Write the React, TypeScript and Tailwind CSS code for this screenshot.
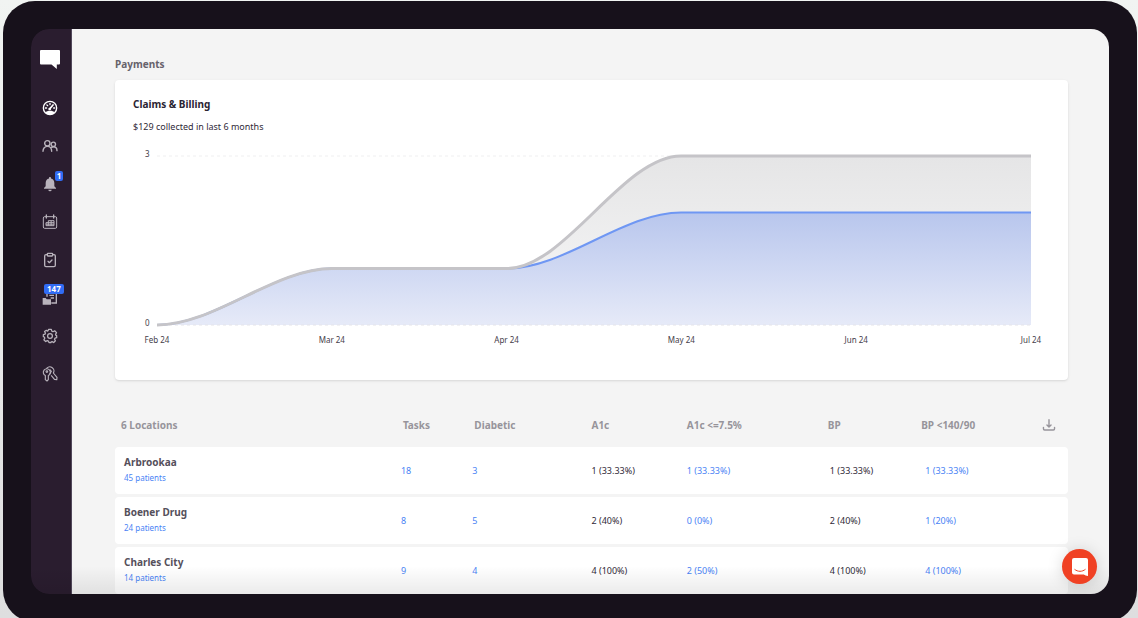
import React from 'react';
import { ClipboardCheck } from 'lucide-react';

interface NavItem {
  label: string;
  icon: React.ReactNode;
  active?: boolean;
  badge?: string;
}

interface Location {
  name: string;
  patients: number;
  tasks: string;
  diabetic: string;
  a1c: string;
  a1cGoal: string;
  bp: string;
  bpGoal: string;
}

const DashboardIcon = () => (
  <svg viewBox="0 0 24 24" className="size-4" fill="none" stroke="currentColor" strokeWidth="2">
    <circle cx="12" cy="12" r="10" />
    <path d="M4.5 18.5c2-1.6 4.6-2.5 7.5-2.5s5.5.9 7.5 2.5A10 10 0 0 1 12 22a10 10 0 0 1-7.500-3.500z" fill="currentColor" stroke="none" />
    <path d="M11.500 13.500 16.500 7.500" strokeWidth="2.600" strokeLinecap="round" />
    <circle cx="11.500" cy="13.500" r="2" fill="currentColor" stroke="none" />
    <path d="M5 12h1.800M7.300 7.300l1.200 1.200M12 5v1.800M17.500 12H19" strokeLinecap="round" />
  </svg>
);

const PeopleIcon = () => (
  <svg viewBox="0 0 24 24" className="size-4" fill="none" stroke="currentColor" strokeWidth="2.100" strokeLinecap="round">
    <circle cx="8" cy="8" r="4" />
    <path d="M1.500 20c0-4.600 2.700-7.500 6.500-7.500s6.500 2.900 6.500 7.500" />
    <circle cx="17" cy="9.500" r="3.300" />
    <path d="M14.500 14c.8-.6 1.600-.9 2.500-.9 3.200 0 5.500 2.400 5.500 5.900" />
  </svg>
);

const BellIcon = () => (
  <svg viewBox="0 0 24 24" className="size-4" fill="currentColor">
    <path d="M12 1.500c-.9 0-1.500.7-1.500 1.500v.8C7.300 4.500 5.500 7.200 5.500 10.500v5L3 18v1.200h18V18l-2.500-2.500v-5c0-3.300-1.800-6-5-6.700V3c0-.8-.6-1.500-1.500-1.500z" />
    <path d="M9.500 20.500h5a2.500 2.500 0 0 1-5 0z" />
  </svg>
);

const CalendarIcon = () => (
  <svg viewBox="0 0 24 24" className="size-4" fill="none" stroke="currentColor" strokeWidth="1.500">
    <rect x="2" y="4" width="20" height="17.500" rx="2" />
    <path d="M6.500 1.500V6M17.500 1.500V6" strokeWidth="2" strokeLinecap="round" />
    <path d="M9.500 10H18v7.500H6V13h12M9.500 10v7.500M13.700 10v7.500M6 15.300h12" />
  </svg>
);

const DocumentsIcon = () => (
  <svg viewBox="0 0 24 24" className="size-4" fill="none" stroke="currentColor" strokeWidth="2">
    <path d="M7.500 10V2.500h14v17H14" />
    <path d="M11 8h7M13 12h5" />
    <path d="M1 12h4.500l1.500 1.700h6.500V22H1z" fill="currentColor" stroke="none" />
  </svg>
);

const GearIcon = () => (
  <svg viewBox="0 0 24 24" className="size-4" fill="none" stroke="currentColor" strokeWidth="1.900" strokeLinejoin="round">
    <path d="M10 2h4l.7 2.800 1.800.8L19 4.200 21.800 7l-1.500 2.500.7 1.700 1 .3v3l-2.400.6-.8 1.800 1.300 2.300-2.600 2.600-2.400-1.400-1.700.7L13.500 22h-3l-.8-2.400-1.800-.7-2.400 1.400-2.700-2.700 1.400-2.300-.7-1.800L2 13v-3l2.500-.7.7-1.700L3.800 5.300 6.500 3.500l2 1.300z" />
    <circle cx="12" cy="12" r="3.600" />
  </svg>
);

const KeysIcon = () => (
  <svg viewBox="0 0 24 24" className="size-4" fill="none" stroke="currentColor" strokeWidth="1.700" strokeLinejoin="round">
    <path d="M5 14.300A5.300 5.300 0 1 1 9.500 14.300V20.500l-2 2-2.500-2z" />
    <path d="M6.500 4.200A5.800 5.800 0 1 1 17 10.500l5.500 6.500-.3 3.500-3.200-.2-5.200-6.300" />
    <circle cx="7.300" cy="8.300" r="1.200" />
    <path d="M12 5.500 14 8l-2.500 4" />
  </svg>
);

const DownloadIcon = () => (
  <svg viewBox="0 0 24 24" className="size-3.5" fill="none" stroke="currentColor" strokeWidth="2.400" strokeLinecap="round" strokeLinejoin="round">
    <path d="M12 3v12M8.500 12l3.500 3.500 3.500-3.500" />
    <path d="M2.500 16v2.500a2 2 0 0 0 2 2h15a2 2 0 0 0 2-2V16" />
  </svg>
);

const navItems: NavItem[] = [
  { label: 'Dashboard', icon: <DashboardIcon />, active: true },
  { label: 'Patients', icon: <PeopleIcon /> },
  { label: 'Notifications', icon: <BellIcon />, badge: '1' },
  { label: 'Calendar', icon: <CalendarIcon /> },
  { label: 'Tasks', icon: <ClipboardCheck className="size-4" strokeWidth={2} /> },
  { label: 'Documents', icon: <DocumentsIcon />, badge: '147' },
  { label: 'Settings', icon: <GearIcon /> },
  { label: 'Access', icon: <KeysIcon /> },
];

const months = ['Feb 24', 'Mar 24', 'Apr 24', 'May 24', 'Jun 24', 'Jul 24'];

const locations: Location[] = [
  { name: 'Arbrookaa', patients: 45, tasks: '18', diabetic: '3', a1c: '1 (33.33%)', a1cGoal: '1 (33.33%)', bp: '1 (33.33%)', bpGoal: '1 (33.33%)' },
  { name: 'Boener Drug', patients: 24, tasks: '8', diabetic: '5', a1c: '2 (40%)', a1cGoal: '0 (0%)', bp: '2 (40%)', bpGoal: '1 (20%)' },
  { name: 'Charles City', patients: 14, tasks: '9', diabetic: '4', a1c: '4 (100%)', a1cGoal: '2 (50%)', bp: '4 (100%)', bpGoal: '4 (100%)' },
];

const Sidebar = () => (
  <nav className="flex w-[41px] shrink-0 flex-col items-center rounded-l-[18px] border-r border-[#51475a] bg-[#2a1d2f] pr-0.5">
    <a href="#" aria-label="Home" className="mt-[21px] text-white">
      <svg viewBox="0 0 20 19" className="h-[19px] w-5" fill="currentColor">
        <path d="M1 0h18a1 1 0 0 1 1 1v12.500a1 1 0 0 1-1 1h-2.200V19L11.500 14.500H1a1 1 0 0 1-1-1V1a1 1 0 0 1 1-1z" />
      </svg>
    </a>
    <ul className="mt-[31px] flex flex-col gap-[22px]">
      {navItems.map((item) => (
        <li key={item.label}>
          <a href="#" aria-label={item.label} className={`relative block ${item.active ? 'text-white' : 'text-[#b9b3bc]'}`}>
            {item.icon}
            {item.badge && (
              <span
                className={`absolute flex h-2.5 items-center justify-center rounded-xs bg-[#316cf4] text-[8px] leading-none font-bold text-white ${
                  item.badge.length > 1 ? '-top-1.5 left-0.5 px-[3px]' : '-top-[5px] left-[13px] w-2'
                }`}
              >
                {item.badge}
              </span>
            )}
          </a>
        </li>
      ))}
    </ul>
  </nav>
);

const ClaimsChart = () => (
  <div className="mt-3.5 pr-[37px] pl-[30px] text-[8px] leading-[10px] text-[#45404a]">
    <div className="flex gap-[7px]">
      <div className="flex h-[179px] w-[5px] flex-col justify-between">
        <span>3</span>
        <span>0</span>
      </div>
      <svg viewBox="0 0 874 172" preserveAspectRatio="none" className="mt-[5px] h-[172px] min-w-0 flex-1 overflow-visible" fill="none">
        <defs>
          <linearGradient id="billed" x1="0" y1="0" x2="0" y2="1">
            <stop offset="0" stopColor="#e5e5e6" />
            <stop offset="1" stopColor="#f8f8f8" />
          </linearGradient>
          <linearGradient id="collected" x1="0" y1="0" x2="0" y2="1">
            <stop offset="0" stopColor="#b8c6ed" />
            <stop offset="1" stopColor="#e6eaf8" />
          </linearGradient>
        </defs>
        <path d="M0 2H874" stroke="#efeff0" strokeDasharray="3 3" />
        <path d="M0 171C58 171 117 114.500 175 114.500H350C408 114.500 466 2 524 2H874V171z" fill="url(#billed)" />
        <path d="M0 171C58 171 117 114.500 175 114.500H350C408 114.500 466 58.500 524 58.500H874V171z" fill="url(#collected)" />
        <path d="M0 171H874" stroke="#e4e4ea" strokeDasharray="3 3" />
        <path d="M0 171C58 171 117 114.500 175 114.500H350C408 114.500 466 58.500 524 58.500H874" stroke="#6f97f3" strokeWidth="2" />
        <path d="M0 171C58 171 117 114.500 175 114.500H350C408 114.500 466 2 524 2H874" stroke="#c5c4c8" strokeWidth="3" />
      </svg>
    </div>
    <div className="mt-[7px] flex justify-between pl-3">
      {months.map((month) => (
        <span key={month} className="flex w-0 justify-center whitespace-nowrap">
          {month}
        </span>
      ))}
    </div>
  </div>
);

const LocationsTable = () => (
  <table className="mt-6 w-full table-fixed border-separate border-spacing-x-0 border-spacing-y-[3px] text-left">
    <colgroup>
      <col className="w-[30%]" />
      <col className="w-[7.500%]" />
      <col className="w-[12.500%]" />
      <col className="w-[10%]" />
      <col className="w-[14.800%]" />
      <col className="w-[9.800%]" />
      <col />
    </colgroup>
    <thead>
      <tr className="h-[37px] text-[10px] leading-4 text-[#97949b] [&>th]:pb-0.5">
        <th className="pl-1.5">6 Locations</th>
        <th className="pl-0.5">Tasks</th>
        <th className="pl-0.5">Diabetic</th>
        <th>A1c</th>
        <th>A1c &lt;=7.5%</th>
        <th>BP</th>
        <th>
          <div className="flex items-center justify-between pr-3">
            BP &lt;140/90
            <button type="button" aria-label="Download">
              <DownloadIcon />
            </button>
          </div>
        </th>
      </tr>
    </thead>
    <tbody>
      {locations.map((row) => (
        <tr key={row.name} className="h-[47px] text-[9px] text-[#302a38] [&>td]:bg-white">
          <td className="rounded-l-sm pb-0.5 pl-[9px]">
            <div className="text-[10px] leading-4 font-bold text-[#55505b]">{row.name}</div>
            <a href="#" className="block text-[8px] leading-4 text-[#4a83f5]">
              {row.patients} patients
            </a>
          </td>
          <td>
            <a href="#" className="text-[#4a83f5]">{row.tasks}</a>
          </td>
          <td>
            <a href="#" className="text-[#4a83f5]">{row.diabetic}</a>
          </td>
          <td>{row.a1c}</td>
          <td>
            <a href="#" className="text-[#4a83f5]">{row.a1cGoal}</a>
          </td>
          <td className="pl-0.5">{row.bp}</td>
          <td className="rounded-r-sm pl-1">
            <a href="#" className="text-[#4a83f5]">{row.bpGoal}</a>
          </td>
        </tr>
      ))}
    </tbody>
  </table>
);

const App: React.FC = () => {
  return (
    <div className="flex h-screen flex-col overflow-hidden bg-linear-to-b from-[#f1f4f2] to-[#dededf] pt-px pr-px pl-[3px] font-['Noto_Sans',sans-serif]">
      <div className="-mb-1 flex min-h-0 flex-1 rounded-[32px] bg-[#17111b] p-7">
        <div className="relative flex min-w-0 flex-1 overflow-hidden rounded-[18px]">
          <Sidebar />
          <main className="min-w-0 flex-1 bg-[#f4f4f4] pt-[27px] pr-[41px] pl-[43px]">
            <h2 className="text-[10px] leading-4 font-bold text-[#66626b]">Payments</h2>
            <section className="mt-2 h-[300px] rounded-sm bg-white pt-4 shadow-sm">
              <h3 className="pl-[18px] text-[10px] leading-4 font-bold text-[#2a2432]">Claims &amp; Billing</h3>
              <p className="mt-[7px] pl-[18px] text-[9px] leading-4 text-[#302a38]">$129 collected in last 6 months</p>
              <ClaimsChart />
            </section>
            <LocationsTable />
          </main>
          <div className="pointer-events-none absolute inset-x-0 bottom-0 h-7 bg-linear-to-b from-transparent to-black/8" />
          <button
            type="button"
            aria-label="Open chat"
            className="absolute right-3 bottom-2.5 flex size-[35px] items-center justify-center rounded-full bg-[#f04124] shadow-[0_1px_16px_rgba(0,0,0,0.15)]"
          >
            <svg viewBox="0 0 16 18" className="h-[18px] w-4" fill="none">
              <path d="M2 0h12a2 2 0 0 1 2 2v16c-1.800-.3-3-.9-4.200-1.600H2a2 2 0 0 1-2-2V2a2 2 0 0 1 2-2z" fill="#fff" />
              <path d="M2.800 11.500c3 2.500 7.400 2.500 10.400 0" stroke="#f04124" strokeLinecap="round" />
            </svg>
          </button>
        </div>
      </div>
    </div>
  );
};

export default App;
